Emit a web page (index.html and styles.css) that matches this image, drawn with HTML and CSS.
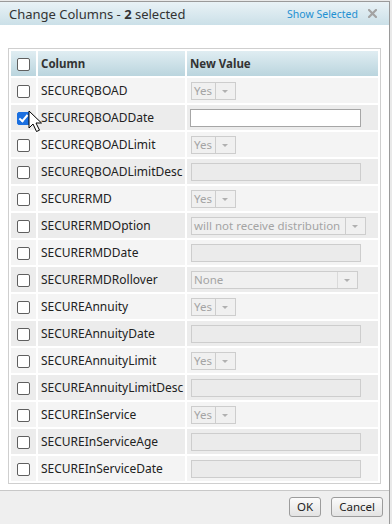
FILE: index.html
```html
<!DOCTYPE html>
<html>
<head>
  <meta charset="utf-8" />
  <title>Change Columns</title>
  <link rel="stylesheet" href="styles.css">
</head>
<body>
  <div class="dialog">
    <div class="title-bar">
      <span class="title">Change Columns - <b>2</b> selected</span>
      <span class="title-links">
        <a class="show-selected">Show Selected</a>
        <svg class="close" width="9" height="9" viewBox="0 0 9 9"><path d="M1 1 L8 8 M8 1 L1 8" stroke="#a3a3a3" stroke-width="2.2" stroke-linecap="square"/></svg>
      </span>
    </div>
    <div class="content">
      <table class="grid">
        <thead>
          <tr>
            <th class="col-check"><span class="box"></span></th>
            <th class="col-name">Column</th>
            <th class="col-value">New Value</th>
          </tr>
        </thead>
        <tbody>
          <tr>
            <td class="col-check"><span class="box"></span></td>
            <td>SECUREQBOAD</td>
            <td><span class="combo"><span class="combo-text">Yes</span><span class="combo-arrow"></span></span></td>
          </tr>
          <tr>
            <td class="col-check cursor-cell"><span class="box checked"></span>
              <svg class="pointer" width="15" height="23" viewBox="0 0 15 23"><path d="M1 1 L1 18 L5 14 L8.5 21.5 L11.5 20.2 L8 13 L13.5 13 Z" fill="#fff" stroke="#000" stroke-width="1" stroke-linejoin="miter"/></svg>
            </td>
            <td>SECUREQBOADDate</td>
            <td><span class="field active"></span></td>
          </tr>
          <tr>
            <td class="col-check"><span class="box"></span></td>
            <td>SECUREQBOADLimit</td>
            <td><span class="combo"><span class="combo-text">Yes</span><span class="combo-arrow"></span></span></td>
          </tr>
          <tr>
            <td class="col-check"><span class="box"></span></td>
            <td>SECUREQBOADLimitDesc</td>
            <td><span class="field"></span></td>
          </tr>
          <tr>
            <td class="col-check"><span class="box"></span></td>
            <td>SECURERMD</td>
            <td><span class="combo"><span class="combo-text">Yes</span><span class="combo-arrow"></span></span></td>
          </tr>
          <tr>
            <td class="col-check"><span class="box"></span></td>
            <td>SECURERMDOption</td>
            <td><span class="combo wide"><span class="combo-text">will not receive distribution</span><span class="combo-arrow"></span></span></td>
          </tr>
          <tr>
            <td class="col-check"><span class="box"></span></td>
            <td>SECURERMDDate</td>
            <td><span class="field"></span></td>
          </tr>
          <tr>
            <td class="col-check"><span class="box"></span></td>
            <td>SECURERMDRollover</td>
            <td><span class="combo none"><span class="combo-text">None</span><span class="combo-arrow"></span></span></td>
          </tr>
          <tr>
            <td class="col-check"><span class="box"></span></td>
            <td>SECUREAnnuity</td>
            <td><span class="combo"><span class="combo-text">Yes</span><span class="combo-arrow"></span></span></td>
          </tr>
          <tr>
            <td class="col-check"><span class="box"></span></td>
            <td>SECUREAnnuityDate</td>
            <td><span class="field"></span></td>
          </tr>
          <tr>
            <td class="col-check"><span class="box"></span></td>
            <td>SECUREAnnuityLimit</td>
            <td><span class="combo"><span class="combo-text">Yes</span><span class="combo-arrow"></span></span></td>
          </tr>
          <tr>
            <td class="col-check"><span class="box"></span></td>
            <td>SECUREAnnuityLimitDesc</td>
            <td><span class="field"></span></td>
          </tr>
          <tr>
            <td class="col-check"><span class="box"></span></td>
            <td>SECUREInService</td>
            <td><span class="combo"><span class="combo-text">Yes</span><span class="combo-arrow"></span></span></td>
          </tr>
          <tr>
            <td class="col-check"><span class="box"></span></td>
            <td>SECUREInServiceAge</td>
            <td><span class="field"></span></td>
          </tr>
          <tr>
            <td class="col-check"><span class="box"></span></td>
            <td>SECUREInServiceDate</td>
            <td><span class="field"></span></td>
          </tr>
        </tbody>
      </table>
    </div>
    <div class="footer">
      <button class="btn">OK</button>
      <button class="btn">Cancel</button>
    </div>
  </div>
</body>
</html>
```

FILE: styles.css
```css
html,
body {
  margin: 0;
  background: #e9e9e9;
  font-family: "Noto Sans", "Open Sans", sans-serif;
  color: #222;
}

.dialog {
  width: 389px;
  height: 522px;
  margin-top: 1px;
  background: #fff;
  border-top: 1px solid #9a9a9a;
  border-right: 1px solid #9a9a9a;
  display: flex;
  flex-direction: column;
}

.title-bar {
  height: 23px;
  flex: none;
  display: flex;
  align-items: center;
  justify-content: space-between;
  padding: 0 12px 0 9px;
  background: linear-gradient(180deg, #e9f2f6 0%, #cbe0e8 100%);
}

.title {
  font-size: 13px;
  color: #333;
}

.title b {
  font-weight: 700;
}

.title-links {
  display: flex;
  align-items: center;
  gap: 10px;
}

.show-selected {
  font-size: 10.5px;
  color: #1e90d2;
}

.close {
  display: block;
}

.content {
  flex: 1;
  padding: 23px 0 0 8px;
}

.grid {
  width: 373px;
  border: 1px solid #cfcfcf;
  border-spacing: 2px;
  font-size: 12px;
}

.grid th {
  height: 25px;
  padding: 0 0 0 3px;
  text-align: left;
  font-weight: 700;
  font-size: 11.5px;
  color: #333;
  background: linear-gradient(180deg, #e0edf2 0%, #bad5de 100%);
}

.grid td {
  height: 25px;
  padding: 0 0 0 3px;
  background: #f4f4f4;
  white-space: nowrap;
}

.grid tbody tr:nth-child(even) td {
  background: #ececec;
}

.grid .col-check {
  width: 25px;
  padding: 0;
  text-align: center;
}

.grid .col-name {
  width: 144px;
}

.box {
  display: inline-block;
  width: 11px;
  height: 11px;
  border: 1px solid #5f5f5f;
  border-radius: 2px;
  background: #fff;
  vertical-align: middle;
  position: relative;
}

.box.checked {
  background: #1a6fe0;
  border-color: #1a6fe0;
}

.box.checked::after {
  content: "";
  position: absolute;
  left: 3px;
  top: 0px;
  width: 3px;
  height: 7px;
  border: solid #fff;
  border-width: 0 2px 2px 0;
  transform: rotate(40deg);
}

.cursor-cell {
  position: relative;
}

.pointer {
  position: absolute;
  left: 17px;
  top: 5px;
}

.combo {
  display: inline-flex;
  width: 45px;
  height: 18px;
  margin-left: 1px;
  border: 1px solid #cdcdcd;
  background: #f0f0f0;
  vertical-align: middle;
  box-sizing: border-box;
}

.combo-text {
  flex: 1;
  padding-left: 2px;
  font-size: 11.5px;
  line-height: 16px;
  color: #a4a4a4;
  border-right: 1px solid #cdcdcd;
  overflow: hidden;
}

.combo-arrow {
  width: 19px;
  position: relative;
}

.combo-arrow::after {
  content: "";
  position: absolute;
  left: 6px;
  top: 7px;
  border-left: 3.5px solid transparent;
  border-right: 3.5px solid transparent;
  border-top: 3.5px solid #b0b0b0;
}

.combo.wide {
  width: 175px;
}

.combo.none {
  width: 167px;
}

.combo.none .combo-text {
  border-right-color: #dadada;
}

.field {
  display: inline-block;
  width: 170px;
  height: 18px;
  margin-left: 1px;
  border: 1px solid #cdcdcd;
  background: #ebebeb;
  vertical-align: middle;
  box-sizing: border-box;
}

.field.active {
  background: #fff;
  border-color: #a6a6a6;
  width: 171px;
  margin-left: 0;
}

.footer {
  height: 31px;
  flex: none;
  border-top: 1px solid #c8c8c8;
  background: #efefef;
  display: flex;
  justify-content: flex-end;
  align-items: center;
  gap: 10px;
  padding: 0 6px 2px 0;
}

.btn {
  height: 20px;
  padding: 0 7px;
  font-family: "Noto Sans", sans-serif;
  font-size: 11.5px;
  color: #222;
  border: 1px solid #9c9c9c;
  border-radius: 3px;
  background: linear-gradient(180deg, #fbfbfb 0%, #e3e3e3 100%);
}
```
